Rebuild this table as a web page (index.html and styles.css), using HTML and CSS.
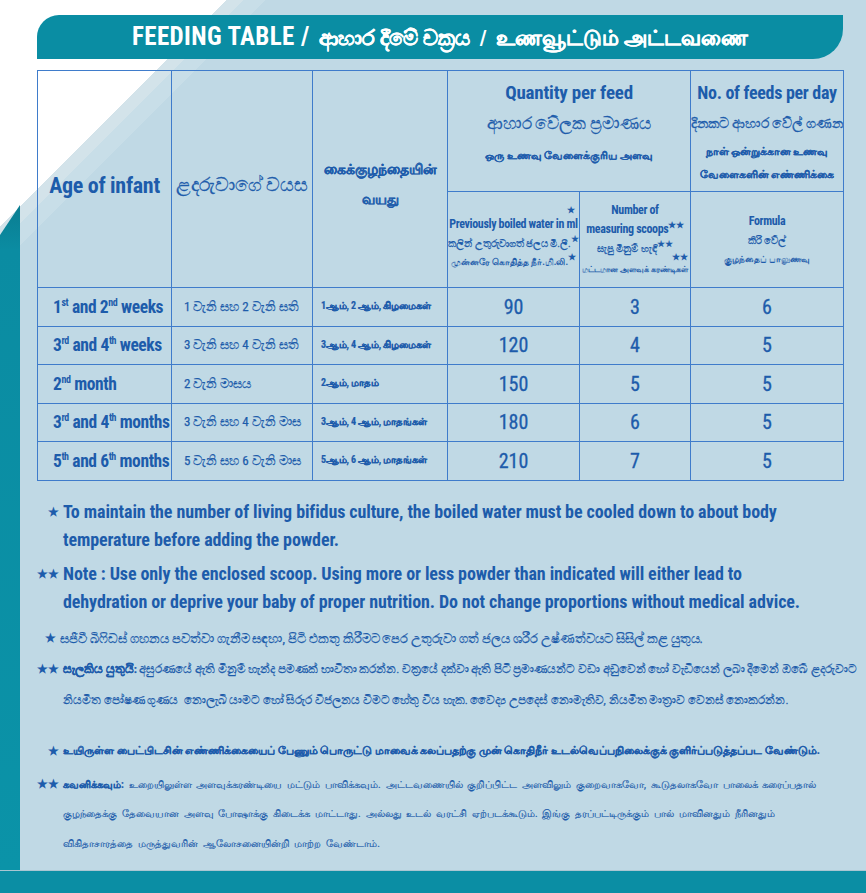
FILE: index.html
```html
<!DOCTYPE html>
<html lang="en">
<head>
<meta charset="utf-8">
<title>Feeding Table</title>
<link rel="stylesheet" href="styles.css">
</head>
<body>
<div class="page">
  <div class="panel">
    <div class="strip"></div>
    <div class="content">
      <h1 class="title"><span class="en-t">FEEDING TABLE /</span>&nbsp; <span class="si">ආහාර දීමේ චක්‍රය</span> &nbsp;/&nbsp; <span class="ta">உணவூட்டும் அட்டவணை</span></h1>
      <table class="feed">
        <colgroup>
          <col class="c1"><col class="c2"><col class="c3"><col class="c4"><col class="c5"><col class="c6">
        </colgroup>
        <thead>
          <tr class="h1row">
            <th rowspan="2" class="big">Age of infant</th>
            <th rowspan="2" class="big-si">ළදරුවාගේ වයස</th>
            <th rowspan="2" class="mid-ta">கைக்குழந்தையின்<br>வயது</th>
            <th colspan="2" class="grp">
              <div class="en-h">Quantity per feed</div>
              <div class="si-h">ආහාර වේලක ප්‍රමාණය</div>
              <div class="ta-h">ஒரு உணவு வேளைக்குரிய அளவு</div>
            </th>
            <th class="grp">
              <div class="en-h narrow">No. of feeds per day</div>
              <div class="si-h small">දිනකට ආහාර වේල් ගණන</div>
              <div class="ta-h two">நாள் ஒன்றுக்கான உணவு<br>வேளைகளின் எண்ணிக்கை</div>
            </th>
          </tr>
          <tr class="h2row">
            <th class="sub">
              <div class="sub-star">★</div>
              <div class="sub-en">Previously boiled water in ml</div>
              <div class="sub-si">කලින් උතුරුවාගත් ජලය මි.ලී.<sup>★</sup></div>
              <div class="sub-ta">முன்னரே கொதித்த நீர்.மி.லி.<sup>★</sup></div>
            </th>
            <th class="sub">
              <div class="sub-en">Number of<br>measuring scoops<sup>★★</sup></div>
              <div class="sub-si">සැපු මිනුම් හැඳි<sup>★★</sup></div>
              <div class="sub-star2">★★</div>
              <div class="sub-ta tight">மட்டமான அளவுக் கரண்டிகள்</div>
            </th>
            <th class="sub">
              <div class="sub-en">Formula</div>
              <div class="sub-si">කිරි වේල්</div>
              <div class="sub-ta">குழந்தைப் பாலுணவு</div>
            </th>
          </tr>
        </thead>
        <tbody>
          <tr>
            <td class="age">1<sup>st</sup> and 2<sup>nd</sup> weeks</td>
            <td class="si-age">1 වැනි සහ 2 වැනි සති</td>
            <td class="ta-age">1ஆம், 2 ஆம், கிழமைகள்</td>
            <td class="num">90</td><td class="num">3</td><td class="num">6</td>
          </tr>
          <tr>
            <td class="age">3<sup>rd</sup> and 4<sup>th</sup> weeks</td>
            <td class="si-age">3 වැනි සහ 4 වැනි සති</td>
            <td class="ta-age">3ஆம், 4 ஆம், கிழமைகள்</td>
            <td class="num">120</td><td class="num">4</td><td class="num">5</td>
          </tr>
          <tr>
            <td class="age">2<sup>nd</sup> month</td>
            <td class="si-age">2 වැනි මාසය</td>
            <td class="ta-age">2ஆம், மாதம்</td>
            <td class="num">150</td><td class="num">5</td><td class="num">5</td>
          </tr>
          <tr>
            <td class="age">3<sup>rd</sup> and 4<sup>th</sup> months</td>
            <td class="si-age">3 වැනි සහ 4 වැනි මාස</td>
            <td class="ta-age">3ஆம், 4 ஆம், மாதங்கள்</td>
            <td class="num">180</td><td class="num">6</td><td class="num">5</td>
          </tr>
          <tr>
            <td class="age">5<sup>th</sup> and 6<sup>th</sup> months</td>
            <td class="si-age">5 වැනි සහ 6 වැනි මාස</td>
            <td class="ta-age">5ஆம், 6 ஆம், மாதங்கள்</td>
            <td class="num">210</td><td class="num">7</td><td class="num">5</td>
          </tr>
        </tbody>
      </table>

      <div class="notes">
        <div class="note en">
          <span class="mark">★</span>
          <span class="txt">To maintain the number of living bifidus culture, the boiled water must be cooled down to about body<br>temperature before adding the powder.</span>
        </div>
        <div class="note en en2">
          <span class="mark">★★</span>
          <span class="txt">Note : Use only the enclosed scoop. Using more or less powder than indicated will either lead to<br>dehydration or deprive your baby of proper nutrition. Do not change proportions without medical advice.</span>
        </div>
        <div class="note sn first-si">
          <span class="mark">★</span>
          <span class="txt">සජීවී බිෆිඩස් ගහනය පවත්වා ගැනීම සඳහා, පිටි එකතු කිරීමට පෙර උතුරුවා ගත් ජලය ශරීර උෂ්ණත්වයට සිසිල් කළ යුතුය.</span>
        </div>
        <div class="note sn sn2">
          <span class="mark">★★</span>
          <span class="txt"><b>සැලකිය යුතුයි:</b> අසුරණයේ ඇති මිනුම් හැන්ද පමණක් භාවිතා කරන්න. චක්‍රයේ දක්වා ඇති පිටි ප්‍රමාණයන්ට වඩා අඩුවෙන් හෝ වැඩියෙන් ලබා දීමෙන් ඔබේ ළදරුවාට<br>නියමිත පෝෂණ ගුණය &nbsp;නොලැබී යාමට හෝ සිරුර විජලනය වීමට හේතු විය හැක. වෛද්‍ය උපදෙස් නොමැතිව, නියමිත මාත්‍රාව වෙනස් නොකරන්න.</span>
        </div>
        <div class="note tn first-ta">
          <span class="mark">★</span>
          <span class="txt"><b>உயிருள்ள பைட்பிடசின் எண்ணிக்கையைப் பேணும் பொருட்டு மாவைக் கலப்பதற்கு முன் கொதிநீர் உடல்வெப்பநிலைக்குக் குளிர்ப்படுத்தப்பட வேண்டும்.</b></span>
        </div>
        <div class="note tn tn2">
          <span class="mark">★★</span>
          <span class="txt"><b>கவனிக்கவும்:</b> உறையிலுள்ள அளவுக்கரண்டியை மட்டும் பாவிக்கவும். அட்டவணையில் குறிப்பிட்ட அளவிலும் குறைவாகவோ, கூடுதலாகவோ பாலைக் கரைப்பதால்<br>குழந்தைக்கு தேவையான அளவு போஷாக்கு கிடைக்க மாட்டாது. அல்லது உடல் வரட்சி ஏற்படக்கூடும். இங்கு தரப்பட்டிருக்கும் பால் மாவினதும் நீரினதும்<br>விகிதாசாரத்தை மருத்துவரின் ஆலோசனையின்றி மாற்ற வேண்டாம்.</span>
        </div>
      </div>
    </div>
  </div>
  <div class="band"></div>
</div>
</body>
</html>
```

FILE: styles.css
```css
* { box-sizing: border-box; }

html, body {
  margin: 0;
  padding: 0;
  background: #0b8ea4;
}

.page {
  width: 866px;
  height: 893px;
  display: flex;
  flex-direction: column;
  overflow: hidden;
  color: #1d5cab;
  font-family: "Roboto Condensed", serif;
}

.panel {
  position: relative;
  height: 871px;
  flex: none;
  background: linear-gradient(135deg, #ffffff 0 160px, #d3e3ea 160px 172px, #c8dee8 172px 188px, #c0d9e5 188px);
  border-bottom: 1px solid #a9c6d2;
}

.strip {
  position: absolute;
  left: 0;
  top: 205px;
  bottom: 0;
  width: 20px;
  background: linear-gradient(180deg, #0a7d91 0, #0b8ca2 45px, #0b93a8 100%);
  clip-path: polygon(0 30px, 100% 0, 100% 100%, 0 100%);
}

.content {
  padding: 15px 23px 0 37px;
}

.title {
  margin: 0;
  height: 44px;
  background: #0a8da3;
  border-radius: 22px 0 30px 0;
  color: #ffffff;
  font-size: 21px;
  font-weight: bold;
  text-align: center;
  line-height: 44px;
  white-space: nowrap;
}
.title .en-t { font-size: 25px; letter-spacing: 0.4px; }
.title .si { font-size: 21px; -webkit-text-stroke: 0.4px #ffffff; }
.title .ta { font-size: 20.5px; -webkit-text-stroke: 0.3px #ffffff; }

.feed {
  margin-top: 11px;
  width: 806px;
  border-collapse: collapse;
  table-layout: fixed;
}
.c1 { width: 134px; }
.c2 { width: 141px; }
.c3 { width: 135px; }
.c4 { width: 132px; }
.c5 { width: 111px; }
.c6 { width: 153px; }

.feed th, .feed td {
  border: 1.5px solid #3f7ccb;
  padding: 0;
  vertical-align: middle;
  text-align: center;
  white-space: nowrap;
  overflow: hidden;
}

.h1row { height: 121px; }
.h2row { height: 96px; }

.big {
  font-size: 22px;
  font-weight: bold;
  letter-spacing: -0.3px;
  padding-top: 12px !important;
}
.big-si {
  font-size: 19px;
  font-weight: normal;
  padding-top: 10px !important;
  -webkit-text-stroke: 0.3px #1d5cab;
}
.mid-ta {
  font-size: 14px;
  font-weight: bold;
  line-height: 30px;
  padding-top: 10px !important;
  -webkit-text-stroke: 0.2px #1d5cab;
}

.grp { vertical-align: top !important; padding-top: 8px !important; }
.en-h { font-size: 19px; font-weight: bold; line-height: 28px; letter-spacing: -0.2px; }
.en-h.narrow { font-size: 18px; letter-spacing: -0.3px; }
.si-h { font-size: 17px; line-height: 32px; font-weight: normal; -webkit-text-stroke: 0.3px #1d5cab; }
.si-h.small { font-size: 13.5px; }
.ta-h { font-size: 10.5px; font-weight: bold; line-height: 22px; margin-top: 6px; -webkit-text-stroke: 0.15px #1d5cab; }
.ta-h.two { line-height: 23px; margin-top: 1px; }

.sub { font-weight: bold; }
.sub sup { font-size: 9px; vertical-align: 5px; line-height: 0; }
.sub-en { font-size: 12px; line-height: 19px; letter-spacing: -0.35px; }
.sub-si { font-size: 10px; line-height: 20px; font-weight: normal; -webkit-text-stroke: 0.25px #1d5cab; }
.sub-ta { font-size: 9px; line-height: 17px; }
.sub-ta.tight { font-size: 8px; }
.sub-star { font-size: 9px; text-align: right; padding-right: 4px; line-height: 10px; margin-top: -4px; }
.sub-star2 { font-size: 9px; text-align: right; padding-right: 2px; line-height: 8px; margin-top: -6px; }

.feed tbody tr { height: 38.5px; }
.age {
  text-align: left !important;
  padding-left: 15px !important;
  font-size: 17.5px;
  font-weight: bold;
  letter-spacing: -0.4px;
}
.age sup { font-size: 10px; vertical-align: 7px; line-height: 0; letter-spacing: -0.4px; }
.si-age { text-align: left !important; padding-left: 12px !important; font-size: 13px; -webkit-text-stroke: 0.25px #1d5cab; }
.ta-age { text-align: left !important; padding-left: 8px !important; font-size: 10px; font-weight: bold; letter-spacing: -0.15px; -webkit-text-stroke: 0.2px #1d5cab; }
.num { font-size: 20px; -webkit-text-stroke: 0.3px #1d5cab; }

.notes {
  padding-top: 17px;
  display: flex;
  flex-direction: column;
}
.note {
  display: grid;
  grid-template-columns: 22px 1fr;
  column-gap: 4px;
  align-items: start;
  white-space: nowrap;
}
.mark {
  text-align: right;
  font-size: 12px;
  font-weight: bold;
  -webkit-text-stroke: 0;
}
.note.en { font-size: 18px; font-weight: bold; line-height: 28px; letter-spacing: -0.1px; }
.note.en .mark { line-height: 28px; letter-spacing: 0; }
.note.en2 { margin-top: 6px; }
.note.sn { font-size: 12.6px; line-height: 31px; -webkit-text-stroke: 0.25px #1d5cab; }
.note.sn .mark { line-height: 31px; }
.note.sn.sn2 { font-size: 11.5px; }
.note.sn.sn2 .mark { font-size: 12px; }
.note.sn.first-si { margin-top: 7px; grid-template-columns: 19px 1fr; }
.note.tn { font-size: 10.1px; line-height: 29.5px; word-spacing: 2.5px; -webkit-text-stroke: 0.2px #1d5cab; }
.note.tn .mark { line-height: 29.5px; font-size: 12px; word-spacing: 0; }
.note.tn.first-ta { margin-top: 20px; line-height: 30px; font-size: 10.95px; word-spacing: 0; }
.note.tn.first-ta .mark { line-height: 30px; }
.note.tn.tn2 { margin-top: 4px; }
.note.tn b { font-weight: bold; }

.band {
  flex: 1;
  background: #0b8ea4;
}
```
